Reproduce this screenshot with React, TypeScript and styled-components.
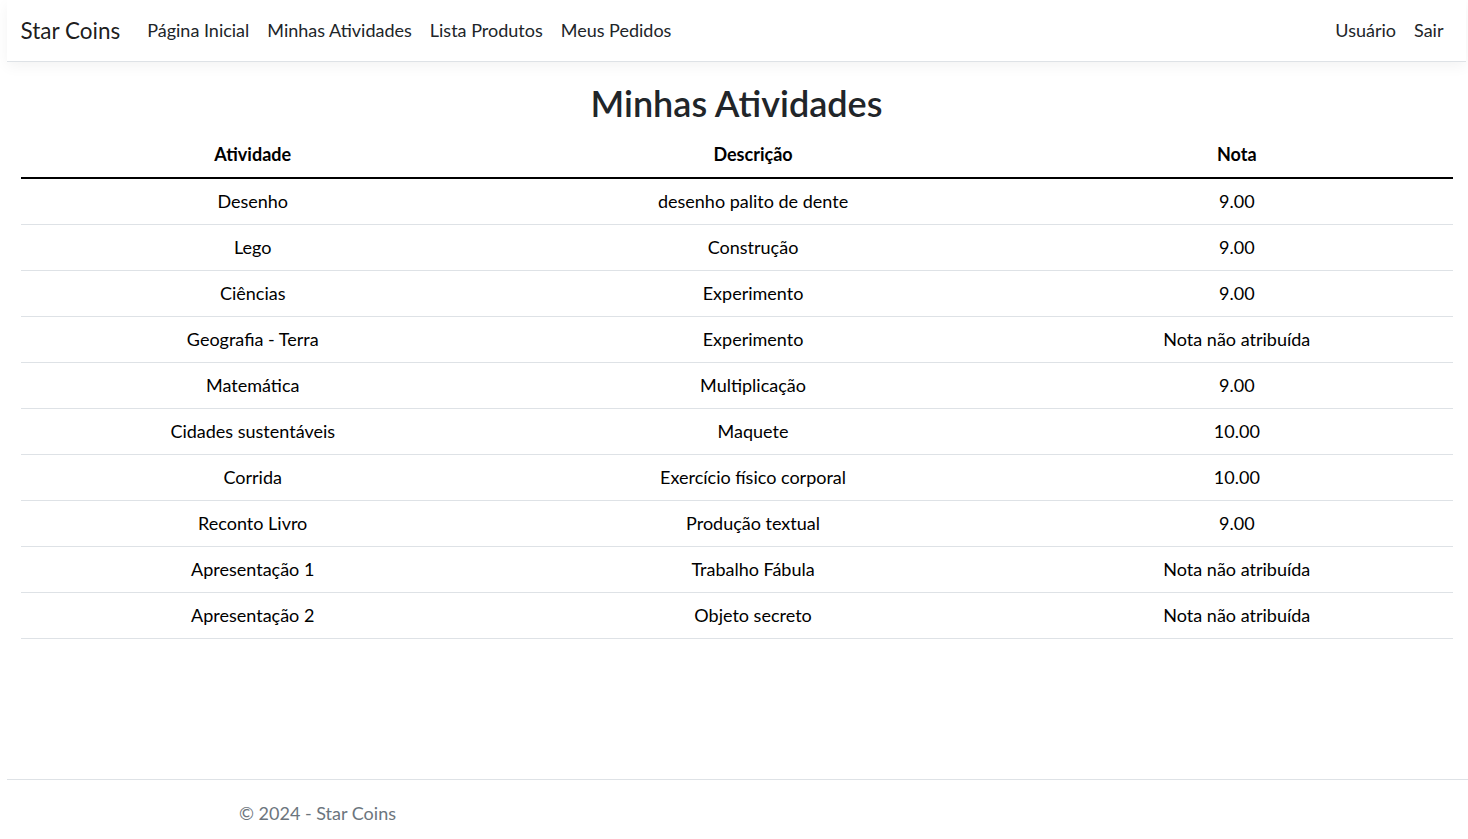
import React from "react";
import styled, { createGlobalStyle } from "styled-components";

const GlobalStyle = createGlobalStyle`
  html, body { margin: 0; padding: 0; background: #fff; }
  body {
    font-family: "Segoe UI", Lato, "Noto Sans", sans-serif;
    font-size: 18px;
    line-height: 1.5;
    color: #212529;
    overflow: hidden;
    height: 839px;
  }
`;

const Page = styled.div`
  position: relative;
  min-height: 847px;
  margin-left: 7px;
  width: 1459px;
`;

const NavBar = styled.nav`
  display: flex;
  align-items: center;
  justify-content: space-between;
  height: 61px;
  padding: 0 13.5px;
  background: #fff;
  border-bottom: 1px solid #dee2e6;
  box-shadow: 0 4.5px 13.5px rgba(0, 0, 0, 0.05);
  margin-bottom: 20px;
`;

const Left = styled.div`
  display: flex;
  align-items: center;
`;

const Brand = styled.a`
  font-size: 22.5px;
  color: rgba(0, 0, 0, 0.9);
  margin-right: 18px;
  text-decoration: none;
  line-height: 1.5;
`;

const NavList = styled.ul`
  display: flex;
  list-style: none;
  margin: 0;
  padding: 0;
`;

const NavLink = styled.a`
  display: block;
  padding: 9px;
  color: #212529;
  text-decoration: none;
  font-size: 18px;
`;

const Main = styled.main`
  padding: 0 13.5px;
`;

const Title = styled.h2`
  margin: 0 0 7px;
  text-align: center;
  font-size: 36px;
  font-weight: 600;
  line-height: 1.2;
  color: #212529;
`;

const Table = styled.table`
  width: 100%;
  border-collapse: collapse;
  table-layout: fixed;
`;

const Th = styled.th<{ $w: string }>`
  width: ${(p) => p.$w};
  padding: 9px;
  text-align: center;
  font-weight: 700;
  color: #000;
  border-bottom: 2px solid #000;
`;

const Td = styled.td`
  padding: 9px;
  text-align: center;
  color: #000;
  border-bottom: 1px solid #dee2e6;
`;

const Footer = styled.footer`
  position: absolute;
  left: 0;
  bottom: 0;
  width: 1468px;
  border-top: 1px solid #dee2e6;
  line-height: 67.5px;
  white-space: nowrap;
  color: #6c757d;
  font-size: 18px;
  padding-left: 232px;
  box-sizing: border-box;
`;

const rows: [string, string, string][] = [
  ["Desenho", "desenho palito de dente", "9.00"],
  ["Lego", "Construção", "9.00"],
  ["Ciências", "Experimento", "9.00"],
  ["Geografia - Terra", "Experimento", "Nota não atribuída"],
  ["Matemática", "Multiplicação", "9.00"],
  ["Cidades sustentáveis", "Maquete", "10.00"],
  ["Corrida", "Exercício físico corporal", "10.00"],
  ["Reconto Livro", "Produção textual", "9.00"],
  ["Apresentação 1", "Trabalho Fábula", "Nota não atribuída"],
  ["Apresentação 2", "Objeto secreto", "Nota não atribuída"],
];

export default function App() {
  return (
    <>
      <GlobalStyle />
      <Page>
        <NavBar>
          <Left>
            <Brand href="#">Star Coins</Brand>
            <NavList>
              <li><NavLink href="#">Página Inicial</NavLink></li>
              <li><NavLink href="#">Minhas Atividades</NavLink></li>
              <li><NavLink href="#">Lista Produtos</NavLink></li>
              <li><NavLink href="#">Meus Pedidos</NavLink></li>
            </NavList>
          </Left>
          <NavList>
            <li><NavLink href="#">Usuário</NavLink></li>
            <li><NavLink href="#">Sair</NavLink></li>
          </NavList>
        </NavBar>
        <Main>
          <Title>Minhas Atividades</Title>
          <Table>
            <thead>
              <tr>
                <Th $w="32.4%">Atividade</Th>
                <Th $w="37.6%">Descrição</Th>
                <Th $w="30%">Nota</Th>
              </tr>
            </thead>
            <tbody>
              {rows.map((r, i) => (
                <tr key={i}>
                  <Td>{r[0]}</Td>
                  <Td>{r[1]}</Td>
                  <Td>{r[2]}</Td>
                </tr>
              ))}
            </tbody>
          </Table>
        </Main>
        <Footer>© 2024 - Star Coins</Footer>
      </Page>
    </>
  );
}
